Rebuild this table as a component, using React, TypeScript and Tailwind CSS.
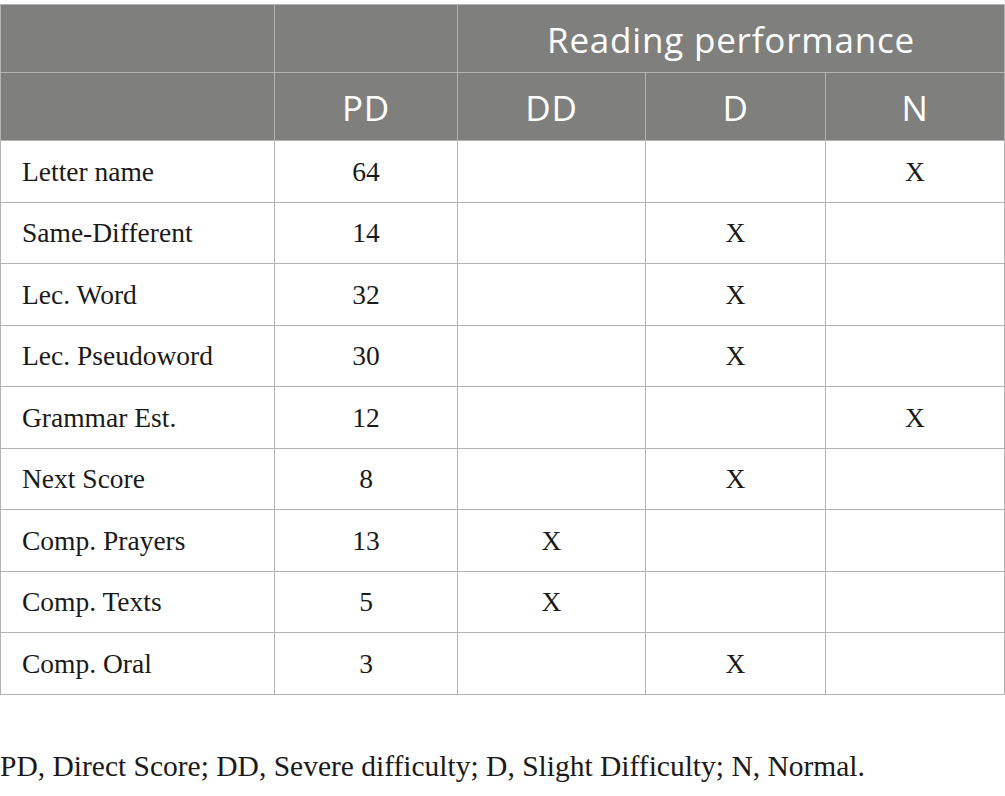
const rows: [string, string, number][] = [
  ["Letter name", "64", 3],
  ["Same-Different", "14", 2],
  ["Lec. Word", "32", 2],
  ["Lec. Pseudoword", "30", 2],
  ["Grammar Est.", "12", 3],
  ["Next Score", "8", 2],
  ["Comp. Prayers", "13", 1],
  ["Comp. Texts", "5", 1],
  ["Comp. Oral", "3", 2],
];

const head = "border border-[#b3b3b3] bg-[#7f807e] text-white font-normal pt-[3px]";
const cell = "border border-[#b3b3b3] h-[61.5px] p-0";

export default function App() {
  return (
    <div className="w-[1005px] h-[796px] bg-white pt-[4px]">
      <table
        className="border-collapse table-fixed w-[1004px]"
        style={{ fontFamily: '"Liberation Serif", serif' }}
      >
        <colgroup>
          <col className="w-[274px]" />
          <col className="w-[183px]" />
          <col className="w-[188px]" />
          <col className="w-[180px]" />
          <col className="w-[179px]" />
        </colgroup>
        <thead className="font-['Open_Sans',sans-serif] text-[35px] tracking-[0.8px]">
          <tr className="h-[68px]">
            <th className={head} />
            <th className={head} />
            <th className={head} colSpan={3}>
              Reading performance
            </th>
          </tr>
          <tr className="h-[68px]">
            <th className={head} />
            <th className={head}>PD</th>
            <th className={head}>DD</th>
            <th className={head}>D</th>
            <th className={head}>N</th>
          </tr>
        </thead>
        <tbody className="text-[27.5px] text-[#1a1a1a]">
          {rows.map(([label, pd, mark]) => (
            <tr key={label}>
              <td className={`${cell} pl-[21px]`}>{label}</td>
              <td className={`${cell} text-center`}>{pd}</td>
              {[1, 2, 3].map((c) => (
                <td key={c} className={`${cell} text-center`}>
                  {mark === c ? "X" : ""}
                </td>
              ))}
            </tr>
          ))}
        </tbody>
      </table>
      <p className="mt-[57px] text-[29.5px] leading-none text-[#1a1a1a] font-['Liberation_Serif',serif]">
        PD, Direct Score; DD, Severe difficulty; D, Slight Difficulty; N, Normal.
      </p>
    </div>
  );
}
